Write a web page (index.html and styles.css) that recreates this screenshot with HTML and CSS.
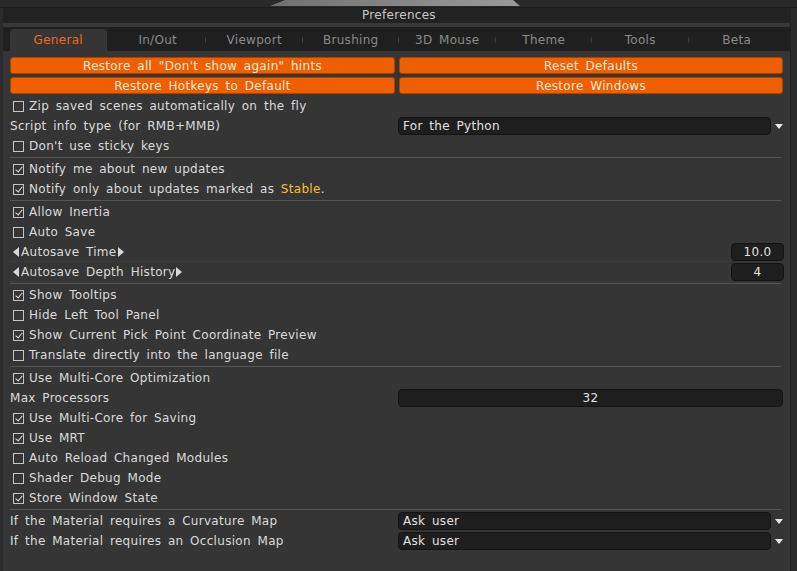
FILE: index.html
```html
<!DOCTYPE html>
<html>
<head>
  <meta charset="utf-8" />
  <title>Preferences</title>
  <link rel="stylesheet" href="styles.css">
</head>
<body>
  <div class="backdrop"><div class="peek"></div></div>
  <div class="window">
    <div class="titlebar">Preferences</div>
    <div class="band"></div>
    <div class="tabs">
      <div class="tab active">General</div>
      <div class="tab">In/Out</div>
      <div class="tab">Viewport</div>
      <div class="tab">Brushing</div>
      <div class="tab">3D Mouse</div>
      <div class="tab">Theme</div>
      <div class="tab">Tools</div>
      <div class="tab last">Beta</div>
    </div>

    <div class="content">
      <div class="buttons">
        <button class="btn">Restore all "Don't show again" hints</button>
        <button class="btn">Reset Defaults</button>
        <button class="btn">Restore Hotkeys to Default</button>
        <button class="btn">Restore Windows</button>
      </div>

      <div class="row"><span class="cb"></span>Zip saved scenes automatically on the fly</div>
      <div class="row split">
        <span class="label">Script info type (for RMB+MMB)</span>
        <div class="combo"><div class="field">For the Python</div><span class="arrow"></span></div>
      </div>
      <div class="row"><span class="cb"></span>Don't use sticky keys</div>
      <div class="sep"></div>

      <div class="row"><span class="cb on"></span>Notify me about new updates</div>
      <div class="row"><span class="cb on"></span>Notify only about updates marked as&nbsp;<span class="stable">Stable</span>.</div>
      <div class="sep"></div>

      <div class="row"><span class="cb on"></span>Allow Inertia</div>
      <div class="row"><span class="cb"></span>Auto Save</div>
      <div class="row spin">
        <span class="label"><span class="tri left"></span>Autosave Time<span class="tri right"></span></span>
        <div class="num">10.0</div>
      </div>
      <div class="row spin">
        <span class="label"><span class="tri left"></span>Autosave Depth History<span class="tri right"></span></span>
        <div class="num">4</div>
      </div>
      <div class="sep"></div>

      <div class="row"><span class="cb on"></span>Show Tooltips</div>
      <div class="row"><span class="cb"></span>Hide Left Tool Panel</div>
      <div class="row"><span class="cb on"></span>Show Current Pick Point Coordinate Preview</div>
      <div class="row"><span class="cb"></span>Translate directly into the language file</div>
      <div class="sep"></div>

      <div class="row"><span class="cb on"></span>Use Multi-Core Optimization</div>
      <div class="row split">
        <span class="label">Max Processors</span>
        <div class="slider">32</div>
      </div>
      <div class="row"><span class="cb on"></span>Use Multi-Core for Saving</div>
      <div class="row"><span class="cb on"></span>Use MRT</div>
      <div class="row"><span class="cb"></span>Auto Reload Changed Modules</div>
      <div class="row"><span class="cb"></span>Shader Debug Mode</div>
      <div class="row"><span class="cb on"></span>Store Window State</div>
      <div class="sep"></div>

      <div class="row split">
        <span class="label">If the Material requires a Curvature Map</span>
        <div class="combo"><div class="field">Ask user</div><span class="arrow"></span></div>
      </div>
      <div class="row split">
        <span class="label">If the Material requires an Occlusion Map</span>
        <div class="combo"><div class="field">Ask user</div><span class="arrow"></span></div>
      </div>
    </div>
  </div>
</body>
</html>
```

FILE: styles.css
```css
:root {
  --bg: #353535;
  --dark: #1f1f1f;
  --text: #dadada;
  --dim: #8a8a8a;
  --orange: #ef5f00;
  --field: #1e1e1e;
}

* {
  margin: 0;
  padding: 0;
  box-sizing: border-box;
}

body {
  background: #2a2a2a;
  font-family: "DejaVu Sans", sans-serif;
  font-size: 12px;
  letter-spacing: 0.3px;
  word-spacing: 2.5px;
  color: var(--text);
  width: 797px;
  height: 571px;
  overflow: hidden;
}

.backdrop {
  height: 8px;
  border-bottom: 1px solid #1c1c1c;
}

.peek {
  margin-left: 270px;
  width: 250px;
  height: 6px;
  background: linear-gradient(90deg, #707070, #9a9a9a);
  clip-path: polygon(15px 0, 243px 0, 250px 6px, 0 6px);
}

.window {
  margin-left: 3px;
  width: 788px;
  height: 563px;
  background: var(--bg);
  border-right: 1px solid #222;
}

.titlebar {
  height: 15px;
  background: #222;
  text-align: center;
  line-height: 15px;
  color: #c8c8c8;
  padding-left: 5px;
}

.band {
  height: 4px;
  background: #383838;
}

.tabs {
  display: flex;
  height: 24px;
  padding: 2px 5px 0 7px;
  background: var(--dark);
}

.tab {
  flex: 1;
  text-align: center;
  line-height: 22px;
  color: var(--dim);
  position: relative;
}

.tab::after {
  content: "";
  position: absolute;
  right: 0;
  top: 8px;
  width: 1px;
  height: 6px;
  background: #3a3a3a;
}

.tab.last::after,
.tab.active::after {
  display: none;
}

.tab.active {
  background: var(--bg);
  color: #f06a1c;
  border-radius: 4px 4px 0 0;
  margin-right: 3px;
}

.content {
  padding: 6px 5px 0 7px;
}

.buttons {
  display: grid;
  grid-template-columns: 385px 384px;
  gap: 3px 4px;
  margin-bottom: 2px;
}

.btn {
  height: 17px;
  background: var(--orange);
  border: 1px solid #a84300;
  border-radius: 3px;
  color: #f6ebdc;
  font-family: inherit;
  font-size: 12px;
  letter-spacing: 0.3px;
  word-spacing: 2.5px;
  line-height: 14px;
}

.row {
  height: 20px;
  display: flex;
  align-items: center;
  white-space: nowrap;
}

.cb {
  width: 11px;
  height: 11px;
  border: 1px solid #c4c4c4;
  margin: 0 5px 0 3px;
  flex: none;
  position: relative;
}

.cb.on::after {
  content: "";
  position: absolute;
  left: 3px;
  top: 0px;
  width: 3px;
  height: 6px;
  border: solid #e0e0e0;
  border-width: 0 1.3px 1.3px 0;
  transform: rotate(40deg);
}

.stable {
  color: #f2c12e;
}

.sep {
  height: 1px;
  margin: 1px 4px 1px 0;
  background: #565656;
}

.split {
  display: grid;
  grid-template-columns: 388px 1fr;
}

.combo {
  display: flex;
  align-items: center;
}

.field {
  flex: 1;
  height: 18px;
  background: var(--field);
  border: 1px solid #131313;
  border-radius: 4px;
  padding-left: 4px;
  line-height: 16px;
  color: #e0e0e0;
}

.arrow {
  width: 0;
  height: 0;
  margin: 0 2px 0 4px;
  border-left: 4px solid transparent;
  border-right: 4px solid transparent;
  border-top: 5px solid #e8e8e8;
}

.slider {
  height: 18px;
  margin-right: 2px;
  background: var(--field);
  border: 1px solid #131313;
  border-radius: 4px;
  text-align: center;
  line-height: 16px;
  color: #e0e0e0;
}

.spin {
  justify-content: space-between;
  border-bottom: 1px solid #3d3d3d;
  margin-right: 54px;
  position: relative;
}

.spin .label {
  display: flex;
  align-items: center;
}

.num {
  position: absolute;
  right: -53px;
  top: 1px;
  width: 53px;
  height: 18px;
  background: var(--field);
  border: 1px solid #131313;
  border-radius: 4px;
  text-align: center;
  line-height: 16px;
  color: #e0e0e0;
}

.tri {
  width: 0;
  height: 0;
  border-top: 5px solid transparent;
  border-bottom: 5px solid transparent;
}

.tri.left {
  border-right: 6px solid #d8d8d8;
  margin: 0 2px 0 3px;
}

.tri.right {
  border-left: 6px solid #d8d8d8;
  margin-left: 1px;
}
```
